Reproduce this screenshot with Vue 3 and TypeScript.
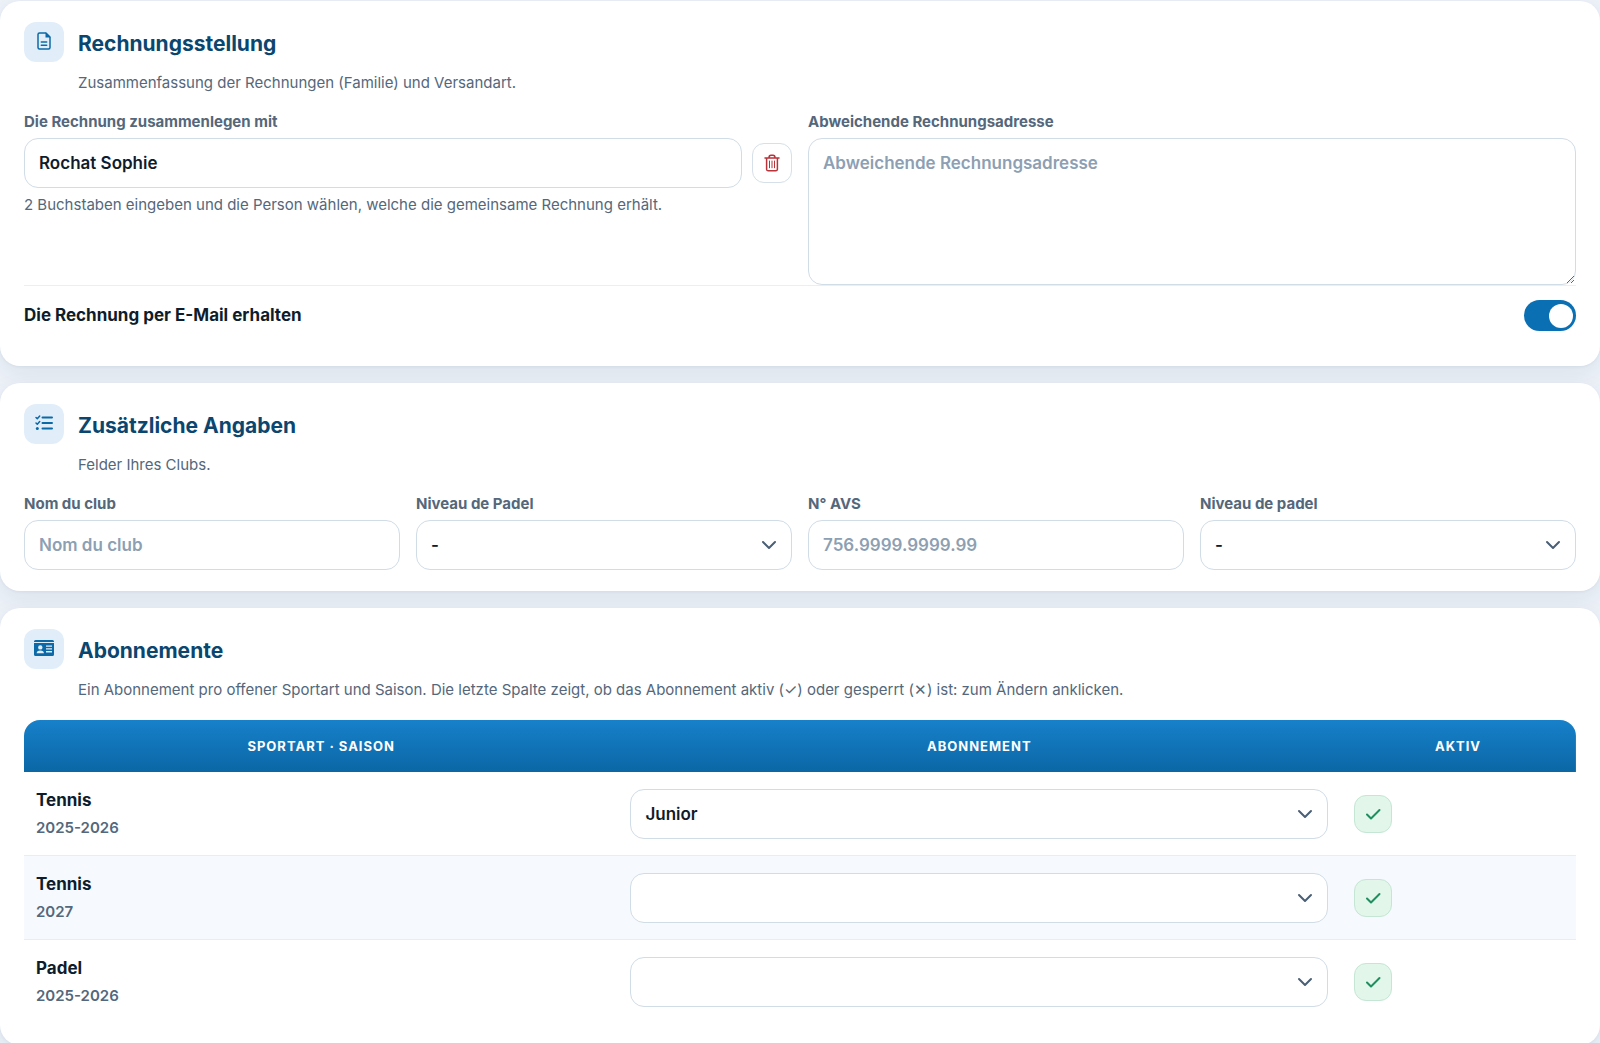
<script setup lang="ts">
import { ref } from 'vue'

interface Subscription {
  sport: string
  season: string
  plan: string
  active: boolean
}

const mergeWith = ref('Rochat Sophie')
const billingAddress = ref('')
const byEmail = ref(true)
const clubName = ref('')
const avsNumber = ref('')
const levelA = ref('-')
const levelB = ref('-')

const subscriptions = ref<Subscription[]>([
  { sport: 'Tennis', season: '2025-2026', plan: 'Junior', active: true },
  { sport: 'Tennis', season: '2027', plan: '', active: true },
  { sport: 'Padel', season: '2025-2026', plan: '', active: true },
])
</script>

<template>
  <main class="page">
    <section class="card">
      <header class="head">
        <span class="badge">
          <svg width="20" height="20" viewBox="0 0 20 20" aria-hidden="true">
            <path class="line" d="M12 2H5.500A1.500 1.500 0 0 0 4 3.500v13A1.500 1.500 0 0 0 5.500 18h9a1.500 1.500 0 0 0 1.500-1.500V6z" />
            <path d="M11.500 1.500v5h5z" fill="currentColor" />
            <path class="line" d="M7.300 11h5.400M7.300 14.300h5.400" />
          </svg>
        </span>
        <h2>Rechnungsstellung</h2>
      </header>
      <p class="intro">Zusammenfassung der Rechnungen (Familie) und Versandart.</p>
      <div class="halves">
        <div class="field">
          <label for="merge">Die Rechnung zusammenlegen mit</label>
          <div class="with-action">
            <input id="merge" v-model="mergeWith" class="control" type="text" />
            <button class="square remove" type="button" aria-label="Entfernen" @click="mergeWith = ''">
              <svg width="18" height="18" viewBox="0 0 18 18" aria-hidden="true">
                <path class="line" d="M2 4h14M3.600 4v11.200A1.600 1.600 0 0 0 5.200 16.800h7.600a1.600 1.600 0 0 0 1.600-1.600V4M6 3.800C6 2 6.800 1.300 8 1.300h2c1.200 0 2 .7 2 2.500" />
                <path class="line fine" d="M6.500 7v6.800M9 7v6.800M11.500 7v6.800" />
              </svg>
            </button>
          </div>
          <p class="hint">2 Buchstaben eingeben und die Person wählen, welche die gemeinsame Rechnung erhält.</p>
        </div>
        <div class="field">
          <label for="address">Abweichende Rechnungsadresse</label>
          <textarea id="address" v-model="billingAddress" class="control" placeholder="Abweichende Rechnungsadresse"></textarea>
        </div>
      </div>
      <div class="setting">
        <label for="email">Die Rechnung per E-Mail erhalten</label>
        <input id="email" v-model="byEmail" class="switch" type="checkbox" role="switch" />
      </div>
    </section>

    <section class="card">
      <header class="head">
        <span class="badge">
          <svg width="20" height="20" viewBox="0 0 20 20" aria-hidden="true">
            <path class="line bold" d="M8.500 4.500H18M8.500 10H18M8.500 15.500H18" />
            <path class="line" d="m2 4.500 1.300 1.300L5.700 3M2 10l1.300 1.300 2.400-2.800" />
            <circle cx="3.300" cy="15.500" r="1.500" fill="currentColor" />
          </svg>
        </span>
        <h2>Zusätzliche Angaben</h2>
      </header>
      <p class="intro">Felder Ihres Clubs.</p>
      <div class="quarters">
        <div class="field">
          <label for="club">Nom du club</label>
          <input id="club" v-model="clubName" class="control" type="text" placeholder="Nom du club" />
        </div>
        <div class="field">
          <label for="level-a">Niveau de Padel</label>
          <div class="select">
            <select id="level-a" v-model="levelA" class="control"><option>-</option></select>
            <svg class="chevron" width="16" height="16" viewBox="0 0 16 16" aria-hidden="true"><path d="m2 5 6 6 6-6" /></svg>
          </div>
        </div>
        <div class="field">
          <label for="avs">N° AVS</label>
          <input id="avs" v-model="avsNumber" class="control" type="text" placeholder="756.9999.9999.99" />
        </div>
        <div class="field">
          <label for="level-b">Niveau de padel</label>
          <div class="select">
            <select id="level-b" v-model="levelB" class="control"><option>-</option></select>
            <svg class="chevron" width="16" height="16" viewBox="0 0 16 16" aria-hidden="true"><path d="m2 5 6 6 6-6" /></svg>
          </div>
        </div>
      </div>
    </section>

    <section class="card">
      <header class="head">
        <span class="badge">
          <svg width="20" height="20" viewBox="0 0 20 20" aria-hidden="true">
            <path fill="currentColor" fill-rule="evenodd" d="M1.500 2h17A1.500 1.500 0 0 1 20 3.500V4H0v-.5A1.500 1.500 0 0 1 1.500 2M0 5h20v11.500a1.500 1.500 0 0 1-1.500 1.500h-17A1.500 1.500 0 0 1 0 16.500zM6.300 7.200a2.200 2.200 0 1 0 0 4.400 2.200 2.200 0 0 0 0-4.400M2.700 15.300h7.200c0-2-1.300-2.900-3.600-2.900s-3.600.9-3.600 2.900M12 7.500v1.300h6V7.500zm0 2.800v1.300h6v-1.300zm0 2.800v1.300h6v-1.300z" />
          </svg>
        </span>
        <h2>Abonnemente</h2>
      </header>
      <p class="intro">
        Ein Abonnement pro offener Sportart und Saison. Die letzte Spalte zeigt, ob das Abonnement aktiv (✓) oder gesperrt (✕) ist: zum Ändern anklicken.
      </p>
      <table>
        <thead>
          <tr>
            <th class="col-sport" scope="col">Sportart · Saison</th>
            <th class="col-plan" scope="col">Abonnement</th>
            <th scope="col">Aktiv</th>
          </tr>
        </thead>
        <tbody>
          <tr v-for="(row, index) in subscriptions" :key="index">
            <td>
              <strong>{{ row.sport }}</strong>
              <small>{{ row.season }}</small>
            </td>
            <td>
              <div class="select">
                <select v-model="row.plan" class="control" :aria-label="`${row.sport} ${row.season}`">
                  <option value=""></option>
                  <option>Junior</option>
                </select>
                <svg class="chevron" width="16" height="16" viewBox="0 0 16 16" aria-hidden="true"><path d="m2 5 6 6 6-6" /></svg>
              </div>
            </td>
            <td>
              <button class="square state" type="button" :aria-pressed="row.active" aria-label="Aktiv" @click="row.active = !row.active">
                <svg width="18" height="18" viewBox="0 0 18 18" aria-hidden="true">
                  <path :d="row.active ? 'm3 9.500 4 4L15.500 5' : 'm4 4 10 10M14 4 4 14'" />
                </svg>
              </button>
            </td>
          </tr>
        </tbody>
      </table>
    </section>
  </main>
</template>

<style>
body {
  margin: 0;
  background: #edf2f9;
}
</style>

<style scoped>
.page,
.page * {
  box-sizing: border-box;
}

.page {
  display: flex;
  flex-direction: column;
  gap: 17px;
  padding-top: 1px;
  font-family: Inter, "Liberation Sans", sans-serif;
  font-size: 17px;
  color: #0f1c2b;
}

.card {
  padding: 21px 24px;
  border-radius: 20px;
  background: #fff;
  box-shadow: 0 8px 24px rgba(15, 50, 80, 0.08), 0 1px 3px rgba(15, 50, 80, 0.06);
}

.head {
  display: flex;
  align-items: center;
  gap: 14px;
}

.badge {
  display: grid;
  place-items: center;
  width: 40px;
  height: 40px;
  padding-bottom: 2px;
  border-radius: 12px;
  background: #e1eefa;
  color: #0b69a8;
}

.line {
  fill: none;
  stroke: currentColor;
  stroke-width: 1.5;
  stroke-linecap: round;
  stroke-linejoin: round;
}

.line.bold {
  stroke-width: 2;
}

.line.fine {
  stroke-width: 1;
}

h2 {
  margin: 0;
  padding-top: 4px;
  font-size: 21px;
  font-weight: 700;
  line-height: 28px;
  color: #0b466f;
}

.intro {
  margin: 9px 0 15px 54px;
  font-size: 15px;
  line-height: 24px;
  color: #54677b;
}

.halves,
.quarters {
  display: grid;
  grid-template-columns: repeat(2, minmax(0, 1fr));
  gap: 16px;
}

.quarters {
  grid-template-columns: repeat(4, minmax(0, 1fr));
}

.field {
  display: flex;
  flex-direction: column;
}

.field > label {
  margin-bottom: 4px;
  font-size: 15px;
  font-weight: 700;
  line-height: 24px;
  color: #54677b;
}

.control {
  display: block;
  width: 100%;
  height: 50px;
  padding: 0 14px;
  border: 1px solid #d0dce6;
  border-radius: 14px;
  background: #fff;
  font: 600 17px/24px Inter, "Liberation Sans", sans-serif;
  color: #0f1c2b;
  outline: none;
}

.control::placeholder {
  color: #8d9fb3;
  opacity: 1;
}

textarea.control {
  height: 147px;
  padding: 12px 14px;
  resize: vertical;
}

.with-action {
  display: flex;
  align-items: center;
  gap: 10px;
}

.square {
  display: grid;
  flex: none;
  place-items: center;
  width: 40px;
  height: 40px;
  padding: 0;
  border: 1px solid #d5e0e8;
  border-radius: 12px;
  background: #fff;
}

.remove {
  color: #b8333a;
}

.hint {
  margin: 5px 0 0;
  font-size: 15px;
  line-height: 24px;
  color: #54677b;
}

.setting {
  display: flex;
  justify-content: space-between;
  padding: 14px 0;
  border-top: 1px solid #e9eff4;
}

.setting label {
  font-weight: 700;
  line-height: 30px;
}

.switch {
  appearance: none;
  width: 52px;
  height: 31px;
  margin: 0;
  padding: 4px 3px;
  border-radius: 16px;
  background: #c3d0dc;
}

.switch::before {
  content: "";
  display: block;
  width: 24px;
  height: 24px;
  border-radius: 50%;
  background: #fff;
}

.switch:checked {
  background: #0b6fb4;
}

.switch:checked::before {
  margin-left: auto;
}

.select {
  display: grid;
  align-items: center;
}

.select > * {
  grid-area: 1 / 1;
}

select.control {
  appearance: none;
  padding-right: 44px;
}

.chevron {
  justify-self: end;
  margin-right: 15px;
  pointer-events: none;
}

.chevron path {
  fill: none;
  stroke: #4a5f75;
  stroke-width: 2;
  stroke-linecap: round;
  stroke-linejoin: round;
}

table {
  width: 100%;
  margin-top: 18px;
  overflow: hidden;
  border-collapse: separate;
  border-spacing: 0;
  border-radius: 16px 16px 0 0;
  table-layout: fixed;
}

.col-sport {
  width: 38.3%;
}

.col-plan {
  width: 46.5%;
}

thead tr {
  background: linear-gradient(#1781ca, #0b67a5);
}

th {
  height: 52px;
  padding: 0 12px;
  font-size: 13px;
  font-weight: 700;
  letter-spacing: 1px;
  text-transform: uppercase;
  color: #fff;
}

td {
  height: 84px;
  padding: 0 12px;
  border-bottom: 1px solid #e6eef4;
}

tbody tr:nth-child(even) {
  background: #f6fafe;
}

tbody tr:last-child td {
  border-bottom: 0;
}

td strong,
td small {
  display: block;
  line-height: 28px;
}

td strong {
  font-weight: 700;
}

td small {
  font-size: 15px;
  font-weight: 600;
  color: #54677b;
}

.state {
  width: 38px;
  height: 38px;
  margin-left: 2px;
  border-color: #c5e6d4;
  background: #e2f6ea;
}

.state path {
  fill: none;
  stroke: #1f8f5f;
  stroke-width: 2;
  stroke-linecap: round;
  stroke-linejoin: round;
}
</style>
